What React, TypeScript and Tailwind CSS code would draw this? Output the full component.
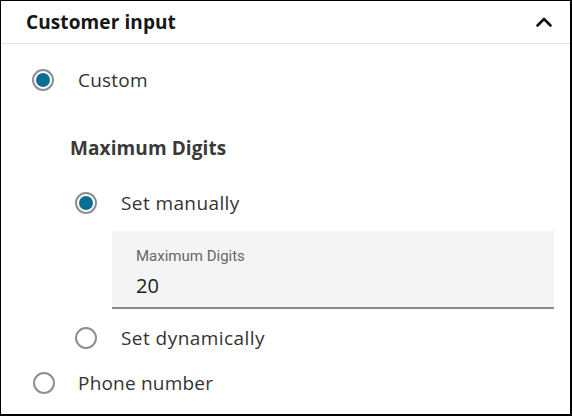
import React from 'react'

const sans = { fontFamily: '"Open Sans", "Noto Sans", Arial, sans-serif' }

function Radio({ checked }: { checked?: boolean }) {
  return (
    <span className="flex h-[22px] w-[22px] shrink-0 items-center justify-center rounded-full border-2 border-[#8f8f8f] bg-white">
      {checked && <span className="h-[14px] w-[14px] rounded-full bg-[#0b6f94]" />}
    </span>
  )
}

export default function App() {
  return (
    <div
      className="flex h-[416px] w-[572px] flex-col border-l border-t border-r-2 border-b-2 border-black bg-white text-[#2a2a2a]"
      style={sans}
    >
      {/* Header */}
      <div className="flex h-[43px] shrink-0 items-center justify-between border-b border-[#e3e3e3] pl-[25px] pr-[16px]">
        <span className="text-[19px] font-bold tracking-[0.1px] text-[#161616]">Customer input</span>
        <svg width="20" height="20" viewBox="0 0 20 20" fill="none">
          <path d="M3.5 13.5L10 7l6.5 6.5" stroke="#111" strokeWidth="2.6" strokeLinecap="round" strokeLinejoin="round" />
        </svg>
      </div>

      {/* Options */}
      <div className="flex flex-col">
        <div className="mt-[1px] flex h-[70px] items-center pl-[31px]">
          <Radio checked />
          <span className="ml-[24px] text-[19px] tracking-[0.2px] text-[#333]">Custom</span>
        </div>

        <div className="flex h-[66px] items-center pl-[69px]">
          <span className="text-[19px] font-bold tracking-[0.1px] text-[#3a3a3a]">Maximum Digits</span>
        </div>

        <div className="flex h-[44px] items-center pl-[74px]">
          <Radio checked />
          <span className="ml-[24px] text-[19px] tracking-[0.4px] text-[#333]">Set manually</span>
        </div>

        <div className="ml-[111px] mr-[16px] mt-[6px] flex h-[78px] flex-col border-b-2 border-[#8a8a8a] bg-[#f4f4f4] pl-[24px] pt-[15px]">
          <span className="text-[15px] leading-[20px] text-[#666]" style={{ fontFamily: 'Roboto, Arial, sans-serif' }}>
            Maximum Digits
          </span>
          <span className="mt-[8px] text-[20px] leading-[24px] text-[#222]">20</span>
        </div>

        <div className="flex h-[58px] items-center pl-[74px]">
          <Radio />
          <span className="ml-[24px] text-[19px] tracking-[0.45px] text-[#333]">Set dynamically</span>
        </div>

        <div className="flex h-[32px] items-center pl-[32px]">
          <Radio />
          <span className="ml-[23px] text-[19px] tracking-[0.2px] text-[#333]">Phone number</span>
        </div>
      </div>
    </div>
  )
}
